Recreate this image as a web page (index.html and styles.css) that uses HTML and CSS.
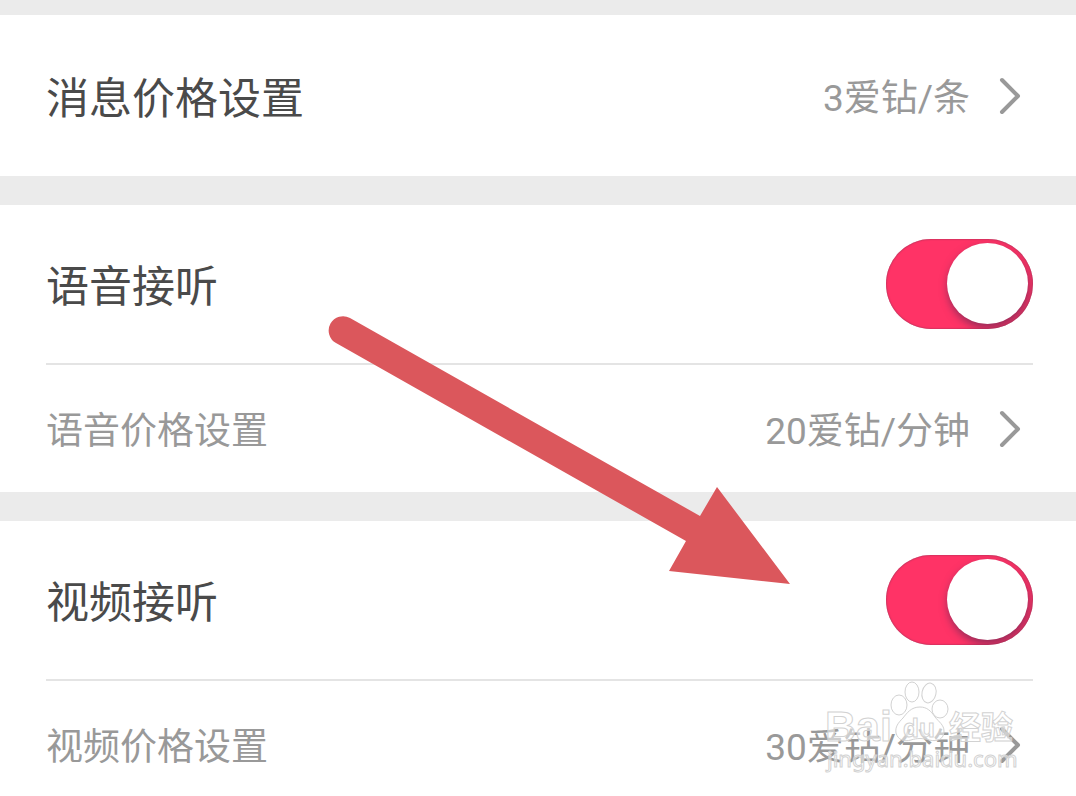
FILE: index.html
```html
<!DOCTYPE html>
<html lang="zh-CN">
<head>
    <meta charset="UTF-8">
    <meta name="viewport" content="width=device-width, initial-scale=1.0">
    <title>价格设置</title>
    <link rel="stylesheet" href="styles.css">
</head>
<body>
    <main class="settings">
        <section class="card">
            <a class="row row-single" href="#message-price">
                <span class="title">消息价格设置</span>
                <span class="value">3爱钻/条</span>
                <svg class="chevron" viewBox="0 0 24 40" aria-hidden="true"><path d="M4 4L20 20L4 36"/></svg>
            </a>
        </section>
        <section class="card">
            <div class="row row-switch">
                <label class="title" for="voice">语音接听</label>
                <input class="switch" type="checkbox" id="voice" checked>
            </div>
            <a class="row row-price" href="#voice-price">
                <span class="subtitle">语音价格设置</span>
                <span class="value">20爱钻/分钟</span>
                <svg class="chevron" viewBox="0 0 24 40" aria-hidden="true"><path d="M4 4L20 20L4 36"/></svg>
            </a>
        </section>
        <section class="card">
            <div class="row row-switch">
                <label class="title" for="video">视频接听</label>
                <input class="switch" type="checkbox" id="video" checked>
            </div>
            <a class="row row-price" href="#video-price">
                <span class="subtitle">视频价格设置</span>
                <span class="value">30爱钻/分钟</span>
                <svg class="chevron" viewBox="0 0 24 40" aria-hidden="true"><path d="M4 4L20 20L4 36"/></svg>
            </a>
            <!-- 水印 -->
            <svg class="watermark" viewBox="0 0 200 100" aria-hidden="true">
                <text class="mark-latin" x="3" y="62">Bai</text>
                <ellipse cx="77" cy="26" rx="8" ry="10"/>
                <ellipse cx="90" cy="13" rx="7" ry="10"/>
                <ellipse cx="107" cy="14" rx="7" ry="10" transform="rotate(12 107 14)"/>
                <ellipse cx="118" cy="30" rx="8" ry="9"/>
                <path d="M98 28C89 28 85 34 81 39C76 44 73 48 74 54C76 61 82 63 89 61C95 59 101 59 107 61C116 63 122 60 122 52C122 46 117 43 113 38C109 32 105 28 98 28Z"/>
                <text class="mark-du" x="81" y="58">du</text>
                <text class="mark-cjk" x="127" y="60">经验</text>
                <text class="mark-url" x="5" y="88">jingyan.baidu.com</text>
            </svg>
        </section>
        <!-- 指向视频接听开关的箭头 -->
        <svg class="arrow" viewBox="0 0 464 270" aria-hidden="true">
            <path d="M22 2L372 200L389 171L462 268L341 255L358 225L8 27A14 14 0 0 1 22 2Z"/>
        </svg>
    </main>
</body>
</html>
```
FILE: styles.css
```css
body {
    margin: 0;
    background-color: #fff;
    font-family: Roboto, "Noto Sans CJK SC", sans-serif;
}
.settings {
    position: relative;
    display: flex;
    flex-direction: column;
    gap: 29px;
    padding-top: 15px;
    background-color: #ebebeb;
}
.card {
    position: relative;
    padding: 0 43px 0 46px;
    background-color: #fff;
}
.row {
    display: flex;
    align-items: center;
    color: #999;
    text-decoration: none;
}
.row-single {
    min-height: 161px;
    padding-right: 11px;
}
.row-switch {
    min-height: 158px;
    border-bottom: 2px solid #e4e4e4;
}
.row-price {
    min-height: 127px;
    padding-right: 11px;
}
.title,
.subtitle {
    flex: 1;
}
.title {
    padding-top: 6px;
    font-size: 43px;
    line-height: 60px;
    color: #4a4a4a;
}
.subtitle,
.value {
    padding-top: 6px;
    font-size: 37px;
    line-height: 52px;
}
.chevron {
    width: 24px;
    height: 40px;
    margin-left: 28px;
    fill: none;
    stroke: #999;
    stroke-width: 4;
    stroke-linecap: round;
    stroke-linejoin: round;
}
.switch {
    appearance: none;
    display: flex;
    align-items: center;
    box-sizing: border-box;
    width: 147px;
    height: 90px;
    margin: 0;
    padding: 0 5px 2px;
    border-radius: 45px;
    background-color: #ccc;
    box-shadow: inset 0 0 2px #803050;
    overflow: hidden;
    cursor: pointer;
}
.switch::before {
    content: "";
    width: 81px;
    height: 81px;
    border-radius: 50%;
    background-color: #fff;
    box-shadow: 1px 4px 8px rgba(70, 40, 80, 0.6);
}
.switch:checked {
    justify-content: flex-end;
    background-color: #ff3366;
}
.arrow {
    position: absolute;
    top: 316px;
    left: 328px;
    width: 464px;
    height: 270px;
    fill: #db575c;
    pointer-events: none;
}
.watermark {
    position: absolute;
    right: 54px;
    bottom: 29px;
    width: 200px;
    height: 100px;
    fill: rgba(255, 255, 255, 0.5);
    stroke: #d2d2d2;
    stroke-width: 1;
    pointer-events: none;
}
.mark-latin {
    font: bold 43px "Liberation Sans", sans-serif;
}
.mark-du {
    font: bold 26px "Liberation Sans", sans-serif;
}
.mark-cjk {
    font: bold 32px "Noto Sans CJK SC", sans-serif;
}
.mark-url {
    font: 22px "Noto Sans", sans-serif;
}
```
